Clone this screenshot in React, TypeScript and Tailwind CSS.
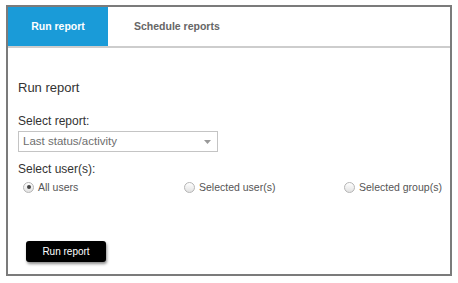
import React from "react";

function Radio({ checked, label, className }: { checked?: boolean; label: string; className?: string }) {
  return (
    <div className={`flex shrink-0 items-center whitespace-nowrap ${className ?? ""}`}>
      <span className="flex h-[11px] w-[11px] shrink-0 items-center justify-center rounded-full border border-[#b5b5b5] bg-gradient-to-b from-[#ffffff] to-[#e2e2e2]">
        {checked && <span className="h-[4px] w-[4px] rounded-full bg-[#444]" />}
      </span>
      <span className="ml-[4px] text-[10.5px] leading-[16px] text-[#555]">{label}</span>
    </div>
  );
}

export default function App() {
  return (
    <div
      className="h-[283px] w-[458px] bg-white pl-[6px] pt-[5px]"
      style={{ fontFamily: '"Liberation Sans", Arial, sans-serif' }}
    >
      <div className="flex h-[271px] w-[446px] flex-col border-2 border-[#7b7b7b] bg-white">
        <div className="flex h-[41px] shrink-0 border-b-2 border-[#cdcdcd]">
          <div className="flex w-[100px] items-center justify-center bg-[#1a9bd8] text-[10.5px] font-bold text-white">
            Run report
          </div>
          <div className="flex items-center pl-[26px] text-[10.5px] font-bold text-[#666]">
            Schedule reports
          </div>
        </div>
        <div className="flex flex-col pl-[10px]">
          <div className="mt-[32px] text-[13px] leading-[16px] text-[#333]">Run report</div>
          <div className="mt-[18px] text-[12px] leading-[14px] text-[#333]">Select report:</div>
          <div className="mt-[3px] flex h-[21px] w-[200px] items-center justify-between border border-[#c4c4c4] bg-white pl-[4px] pr-[6px]">
            <span className="text-[11.5px] text-[#6e6e6e]">Last status/activity</span>
            <svg width="7" height="4" viewBox="0 0 7 4">
              <path d="M0 0 L7 0 L3.5 4 Z" fill="#999" />
            </svg>
          </div>
          <div className="mt-[10px] text-[12px] leading-[14px] text-[#333]">Select user(s):</div>
          <div className="mt-[3px] flex h-[16px] pl-[5px]">
            <Radio checked label="All users" className="w-[161px]" />
            <Radio label="Selected user(s)" className="w-[160px]" />
            <Radio label="Selected group(s)" />
          </div>
          <div className="ml-[8px] mt-[46px] flex h-[21px] w-[80px] items-center justify-center rounded-[3px] bg-black text-[10px] text-white shadow-[1px_2px_3px_rgba(0,0,0,0.45)]">
            Run report
          </div>
        </div>
      </div>
    </div>
  );
}
